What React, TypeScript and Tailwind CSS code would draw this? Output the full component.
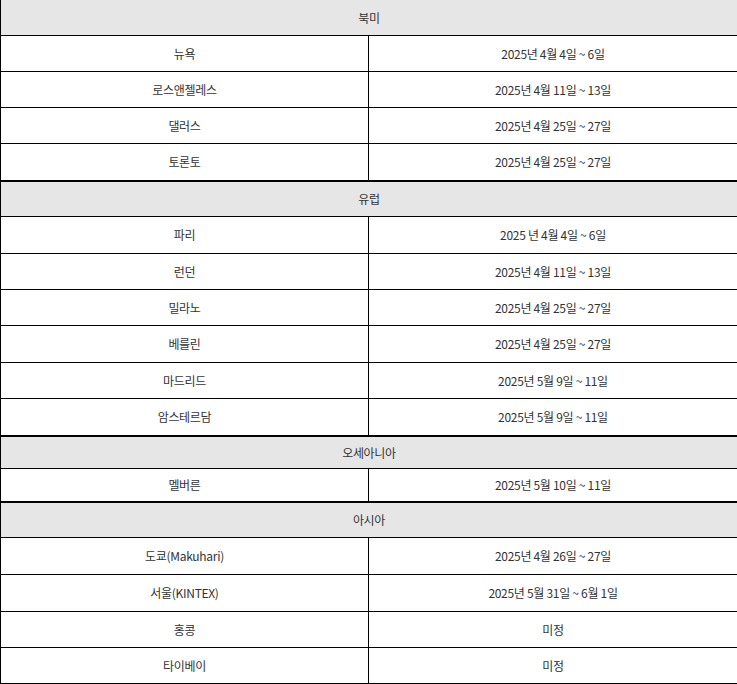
const sections = [
  {
    name: "북미",
    h: "h-[36px]",
    rows: [
      ["뉴욕", "2025년 4월 4일 ~ 6일", "h-[35px]"],
      ["로스앤젤레스", "2025년 4월 11일 ~ 13일", "h-[35px]"],
      ["댈러스", "2025년 4월 25일 ~ 27일", "h-[35px]"],
      ["토론토", "2025년 4월 25일 ~ 27일", "h-[36px]"],
    ],
  },
  {
    name: "유럽",
    h: "h-[35px]",
    rows: [
      ["파리", "2025 년 4월 4일 ~ 6일", "h-[36px]"],
      ["런던", "2025년 4월 11일 ~ 13일", "h-[35px]"],
      ["밀라노", "2025년 4월 25일 ~ 27일", "h-[35px]"],
      ["베를린", "2025년 4월 25일 ~ 27일", "h-[36px]"],
      ["마드리드", "2025년 5월 9일 ~ 11일", "h-[35px]"],
      ["암스테르담", "2025년 5월 9일 ~ 11일", "h-[36px]"],
    ],
  },
  {
    name: "오세아니아",
    h: "h-[32px]",
    rows: [["멜버른", "2025년 5월 10일 ~ 11일", "h-[32px]"]],
  },
  {
    name: "아시아",
    h: "h-[35px]",
    rows: [
      ["도쿄(Makuhari)", "2025년 4월 26일 ~ 27일", "h-[36px]"],
      ["서울(KINTEX)", "2025년 5월 31일 ~ 6월 1일", "h-[36px]"],
      ["홍콩", "미정", "h-[35px]"],
      ["타이베이", "미정", "h-[35px]"],
    ],
  },
];

export default function App() {
  return (
    <div
      className="w-[737px] bg-white text-[12px] text-[#333] tracking-[-0.3px]"
      style={{ fontFamily: '"Noto Sans CJK KR", "Noto Sans", sans-serif' }}
    >
      <div className="border-l border-black">
        {sections.map((s, si) => (
          <div key={s.name}>
            <div
              className={`${s.h} flex items-center justify-center bg-[#e6e6e6] border-b border-black`}
            >
              {s.name}
            </div>
            {s.rows.map(([city, date, h], ri) => {
              const last = ri === s.rows.length - 1 && si < sections.length - 1;
              return (
                <div
                  key={city}
                  className={`flex border-black ${last ? "border-b-2" : "border-b"}`}
                >
                  <div className={`${h} w-[368px] flex items-center justify-center border-r border-black`}>
                    {city}
                  </div>
                  <div className={`${h} flex-1 flex items-center justify-center`}>{date}</div>
                </div>
              );
            })}
          </div>
        ))}
      </div>
    </div>
  );
}
